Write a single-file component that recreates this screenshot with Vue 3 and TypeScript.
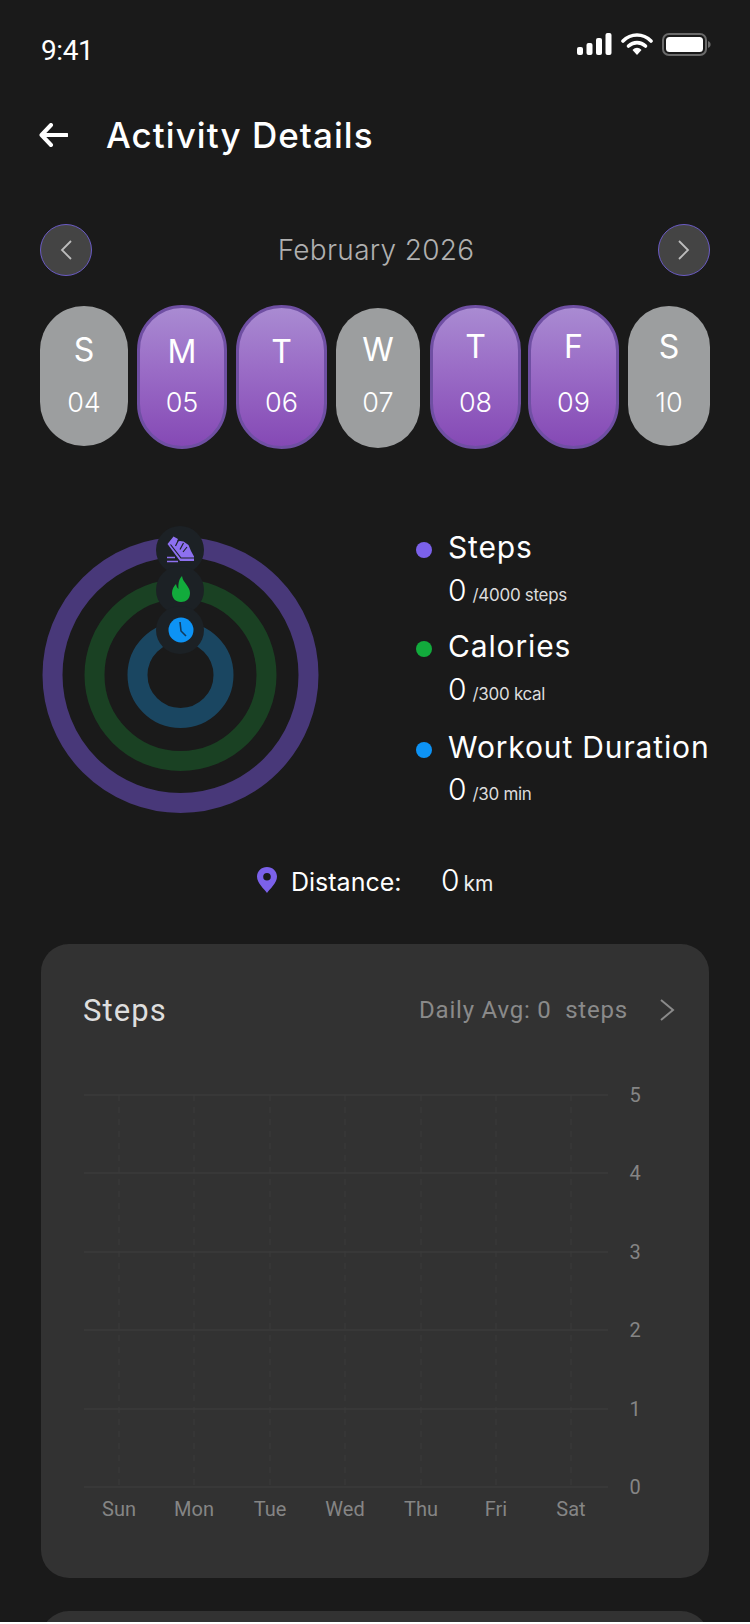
<script setup lang="ts">
interface Day { letter: string; num: string; active: boolean; width: number; top: number; left: number; letterCenter: number }
const NUM_CENTER = 403
const ROW_TOP = 305
const days: Day[] = [
  { letter: 'S', num: '04', active: false, width: 88, top: 1, left: 0, letterCenter: 350 },
  { letter: 'M', num: '05', active: true, width: 90, top: 0, left: 9, letterCenter: 352 },
  { letter: 'T', num: '06', active: true, width: 91, top: 0, left: 9, letterCenter: 352 },
  { letter: 'W', num: '07', active: false, width: 84, top: 3, left: 9, letterCenter: 350 },
  { letter: 'T', num: '08', active: true, width: 91, top: 0, left: 10, letterCenter: 347 },
  { letter: 'F', num: '09', active: true, width: 91, top: 0, left: 7, letterCenter: 347 },
  { letter: 'S', num: '10', active: false, width: 82, top: 1, left: 9, letterCenter: 347 }
]
function dayStyle(d: Day) {
  return {
    width: d.width + 'px',
    height: (d.active ? 144 : 140) + 'px',
    marginTop: d.top + 'px',
    marginLeft: d.left + 'px'
  }
}
function letterStyle(d: Day) {
  const inner = ROW_TOP + d.top + (d.active ? 3 : 0)
  return { marginTop: d.letterCenter - 20 - inner + 'px' }
}
function numStyle(d: Day) {
  return { marginTop: NUM_CENTER - 17 - (d.letterCenter + 20) + 'px' }
}
const legend = [
  { label: 'Steps', value: '0', goal: '/4000 steps', color: '#7b61ea' },
  { label: 'Calories', value: '0', goal: '/300 kcal', color: '#12ab3c' },
  { label: 'Workout Duration', value: '0', goal: '/30 min', color: '#0d93f5' }
]
const rings = [
  { r: 128, color: '#483879' },
  { r: 86, color: '#1a4123' },
  { r: 43, color: '#1a4661' }
]
const yLabels = [
  { t: '5', y: 1095 }, { t: '4', y: 1173 }, { t: '3', y: 1252 },
  { t: '2', y: 1330 }, { t: '1', y: 1409 }, { t: '0', y: 1487 }
]
const xLabels = [
  { t: 'Sun', x: 119 }, { t: 'Mon', x: 194 }, { t: 'Tue', x: 270 }, { t: 'Wed', x: 345 },
  { t: 'Thu', x: 421 }, { t: 'Fri', x: 496 }, { t: 'Sat', x: 571 }
]
</script>

<template>
  <div class="page">
    <div class="status">
      <span class="time">9:41</span>
      <div class="status-icons">
        <svg width="35" height="22" viewBox="0 0 35 22">
          <rect x="0" y="14" width="6" height="8" rx="2" fill="#fff" />
          <rect x="9.5" y="10" width="6" height="12" rx="2" fill="#fff" />
          <rect x="19" y="5" width="6" height="17" rx="2" fill="#fff" />
          <rect x="28.5" y="0" width="6" height="22" rx="2" fill="#fff" />
        </svg>
        <svg width="32" height="22" viewBox="0 0 32 22">
          <path d="M2 8 C10 0 22 0 30 8" fill="none" stroke="#fff" stroke-width="3.6" stroke-linecap="round" />
          <path d="M7.5 13 C12.5 8.5 19.5 8.5 24.5 13" fill="none" stroke="#fff" stroke-width="3.6" stroke-linecap="round" />
          <path d="M11.5 17 C14.5 14 17.5 14 20.5 17 L16 22 Z" fill="#fff" />
        </svg>
        <svg width="49" height="23" viewBox="0 0 49 23">
          <rect x="1" y="1" width="43" height="21" rx="6" fill="none" stroke="#6a6a6a" stroke-width="2" />
          <rect x="4" y="4" width="37" height="15" rx="3.5" fill="#fff" />
          <path d="M46 8 C48 9 48.6 10 48.6 11.5 C48.6 13 48 14 46 15 Z" fill="#6a6a6a" />
        </svg>
      </div>
    </div>

    <header class="header">
      <svg class="back" width="29" height="24" viewBox="0 0 29 24">
        <path d="M12 2 L2.5 12 L12 22 M3 12 H28" fill="none" stroke="#fff" stroke-width="4" stroke-linecap="round" stroke-linejoin="round" />
      </svg>
      <h1 class="title">Activity Details</h1>
    </header>

    <div class="month">
      <button class="nav">
        <svg width="14" height="22" viewBox="0 0 14 22"><path d="M12 2 L3 11 L12 20" fill="none" stroke="#bdbdbd" stroke-width="1.8" /></svg>
      </button>
      <span class="month-name">February 2026</span>
      <button class="nav">
        <svg width="14" height="22" viewBox="0 0 14 22"><path d="M2 2 L11 11 L2 20" fill="none" stroke="#bdbdbd" stroke-width="1.8" /></svg>
      </button>
    </div>

    <div class="days">
      <div
        v-for="d in days"
        :key="d.num"
        class="day"
        :class="{ active: d.active }"
        :style="dayStyle(d)"
      >
        <span class="letter" :style="letterStyle(d)">{{ d.letter }}</span>
        <span class="num" :style="numStyle(d)">{{ d.num }}</span>
      </div>
    </div>

    <section class="summary">
      <svg class="rings" width="280" height="300" viewBox="40 520 280 300">
        <circle v-for="r in rings" :key="r.r" cx="180.5" cy="675" :r="r.r" fill="none" :stroke="r.color" stroke-width="20" />
        <circle cx="180" cy="550" r="24" fill="#1c2125" />
        <circle cx="180" cy="590" r="24" fill="#1c2125" />
        <circle cx="180" cy="630" r="24" fill="#1c2125" />
        <path d="M167.5 544 L173.5 536.5 L178 539 L177 541.5 L180 541 L183.5 541.5 L188.5 545 L191 551 L194 556.5 L194 561 L180 561 Z" fill="#8d70f0" />
        <path d="M170.5 544.5 L181 558 H194 M178.5 540 L175.5 546 M183.5 543 L180 549.5 M187 547 L183 552" stroke="#1c2125" stroke-width="1.2" fill="none" />
        <path d="M167 557.5 H175 M167 561.5 H178" stroke="#8d70f0" stroke-width="1.3" fill="none" />
        <path d="M182 576 C183 583 190 586 190 593 C190 599 186 602 181 602 C175.5 602 172 598 172 593 C172 589 174 586 176 584 C176.5 586 177 588 178.5 589 C178 584 179 579 182 576 Z" fill="#12ab3c" />
        <circle cx="181" cy="630" r="12.5" fill="#0d93f5" />
        <path d="M180 622 L181 631 L186 636" fill="none" stroke="#123a5c" stroke-width="1.6" />
      </svg>
      <div class="legend">
        <div v-for="item in legend" :key="item.label" class="legend-item">
          <div class="legend-head">
            <span class="dot" :style="{ background: item.color }"></span>
            <span class="legend-label">{{ item.label }}</span>
          </div>
          <div class="legend-value">
            <span class="big">{{ item.value }}</span>
            <span class="goal">{{ item.goal }}</span>
          </div>
        </div>
      </div>
    </section>

    <div class="distance">
      <svg width="20" height="26" viewBox="0 0 20 26">
        <path d="M10 0 C15.5 0 20 4.2 20 9.6 C20 16 13 22 10 26 C7 22 0 16 0 9.6 C0 4.2 4.5 0 10 0 Z M10 6 A3.8 3.8 0 1 0 10 13.6 A3.8 3.8 0 1 0 10 6 Z" fill="#7b61ea" fill-rule="evenodd" />
      </svg>
      <span class="dist-label">Distance:</span>
      <span class="dist-value">0</span>
      <span class="dist-unit">km</span>
    </div>

    <section class="card">
      <div class="card-head">
        <span class="card-title">Steps</span>
        <span class="card-avg">Daily Avg: 0&nbsp; steps</span>
        <svg width="16" height="24" viewBox="0 0 16 24"><path d="M2 2 L14 12 L2 22" fill="none" stroke="#8a8a8a" stroke-width="2" /></svg>
      </div>
      <svg class="chart" width="667" height="500" viewBox="41 1050 667 500">
        <line v-for="y in yLabels" :key="'h' + y.t" x1="84" :y1="y.y" x2="608" :y2="y.y" stroke="#3f3f3f" stroke-width="1" />
        <line v-for="x in xLabels" :key="'v' + x.t" :x1="x.x" y1="1095" :x2="x.x" y2="1487" stroke="#3b3b3b" stroke-width="1" stroke-dasharray="6 6" />
        <text v-for="y in yLabels" :key="'y' + y.t" x="635" :y="y.y + 7" class="axis" text-anchor="middle">{{ y.t }}</text>
        <text v-for="x in xLabels" :key="'x' + x.t" :x="x.x" y="1516" class="axis" text-anchor="middle">{{ x.t }}</text>
      </svg>
    </section>

    <section class="card next"></section>
  </div>
</template>

<style scoped>
.page {
  width: 750px;
  height: 1622px;
  overflow: hidden;
  box-sizing: border-box;
  padding: 0 40px;
  background: #1a1a1a;
  color: #fff;
  font-family: Inter, "Noto Sans", sans-serif;
}
.status {
  height: 100px;
  display: flex;
  justify-content: space-between;
  align-items: center;
}
.time {
  font-family: Roboto, sans-serif;
  font-size: 28px;
  line-height: 36px;
  letter-spacing: -0.4px;
  margin: 2px 0 0 1px;
}
.status-icons {
  display: flex;
  align-items: flex-start;
  gap: 9px;
  margin-top: -11px;
  margin-right: -1px;
}
.header {
  height: 70px;
  display: flex;
  align-items: center;
  gap: 38px;
}
.back {
  margin-left: -1px;
}
.title {
  margin: 0;
  font-size: 35px;
  font-weight: 500;
  letter-spacing: 1.05px;
}
.month {
  margin-top: 54px;
  height: 52px;
  display: flex;
  justify-content: space-between;
  align-items: center;
}
.nav {
  width: 52px;
  height: 52px;
  padding: 0;
  border-radius: 50%;
  border: 1px solid #6a5bc4;
  background: #444444;
  display: flex;
  align-items: center;
  justify-content: center;
}
.month-name {
  margin-left: 2px;
  font-size: 28px;
  font-weight: 300;
  letter-spacing: 0.3px;
  color: #b0b0b0;
}
.days {
  margin-top: 29px;
  height: 144px;
  display: flex;
  align-items: flex-start;
}
.day {
  flex: none;
  box-sizing: border-box;
  border-radius: 46px;
  background: #9c9e9f;
  display: flex;
  flex-direction: column;
  align-items: center;
}
.day.active {
  border: 3px solid #6f4fa3;
  background: linear-gradient(180deg, #a98bd2 0%, #9a6cc6 45%, #8549b5 100%);
}
.letter {
  font-size: 32px;
  line-height: 40px;
  height: 40px;
}
.num {
  font-size: 27px;
  font-weight: 300;
  line-height: 34px;
}
.summary {
  margin-top: 71px;
  display: flex;
  height: 300px;
}
.rings {
  flex: none;
}
.legend {
  margin-left: 96px;
  padding-top: 7px;
  display: flex;
  flex-direction: column;
  gap: 16px;
}
.legend-item:nth-child(3) {
  margin-top: 2px;
}
.legend-item:nth-child(3) .legend-value {
  margin-top: 2px;
}
.legend-head {
  height: 40px;
  display: flex;
  align-items: center;
  gap: 16px;
}
.dot {
  width: 16px;
  height: 16px;
  border-radius: 50%;
  margin-top: 5px;
}
.legend-label {
  font-size: 30px;
  letter-spacing: 0.85px;
  white-space: nowrap;
}
.legend-value {
  height: 40px;
  margin-top: 3px;
  margin-left: 32px;
  display: flex;
  align-items: baseline;
  gap: 6px;
}
.big {
  font-size: 30px;
  font-weight: 300;
  line-height: 40px;
}
.goal {
  font-size: 17px;
  letter-spacing: -0.3px;
  color: #dcdcdc;
}
.distance {
  margin-top: 40px;
  margin-left: 217px;
  height: 40px;
  display: flex;
  align-items: center;
}
.dist-label {
  margin: 4px 0 0 14px;
  font-size: 25px;
  width: 150px;
}
.dist-value {
  font-size: 30px;
  font-weight: 300;
}
.dist-unit {
  margin-left: 4px;
  margin-top: 6px;
  font-size: 21px;
  color: #eeeeee;
}
.card {
  margin: 44px 1px 0 1px;
  height: 634px;
  border-radius: 28px;
  background: #323232;
}
.card.next {
  margin-top: 33px;
}
.card-head {
  padding: 46px 34px 0 42px;
  height: 40px;
  display: flex;
  align-items: center;
  font-family: Roboto, sans-serif;
}
.card-title {
  font-size: 31px;
  letter-spacing: 1.1px;
  color: #dedede;
  flex: 1;
}
.card-avg {
  font-size: 24px;
  letter-spacing: 0.8px;
  color: #8a8a8a;
  margin-right: 31px;
}
.chart {
  display: block;
  margin-top: 20px;
}
.axis {
  font-family: Roboto, sans-serif;
  font-size: 20px;
  fill: #858585;
}
</style>
